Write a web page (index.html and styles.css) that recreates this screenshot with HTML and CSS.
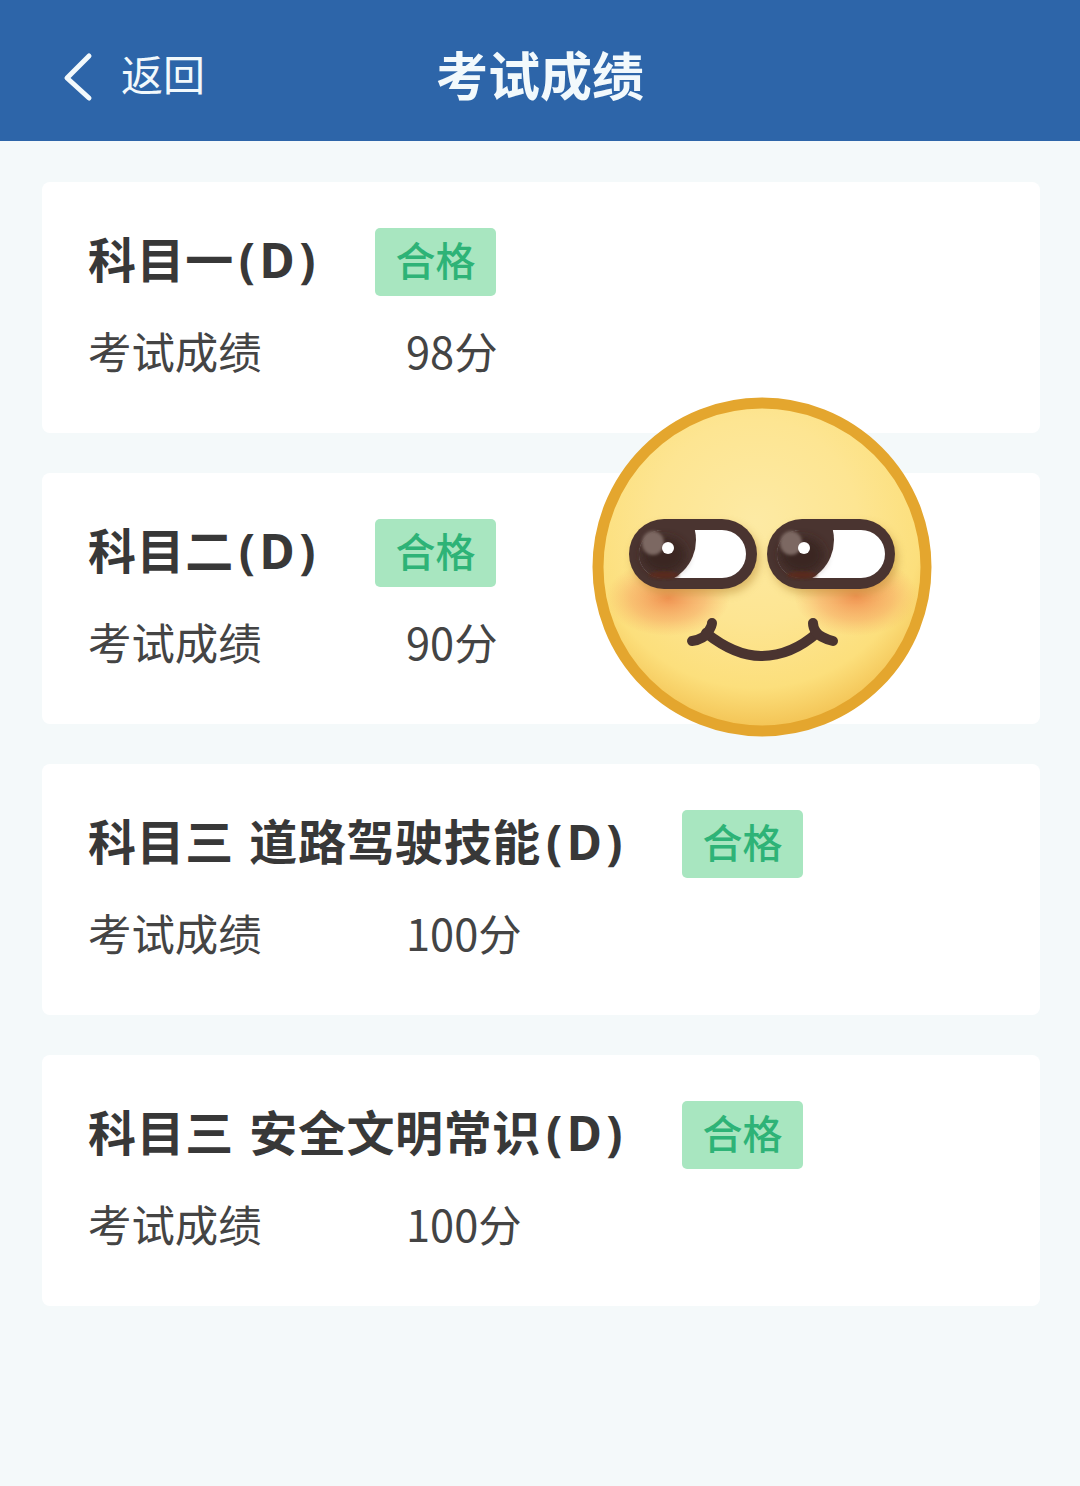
FILE: index.html

```html
<!DOCTYPE html>
<html lang="zh-CN">
<head>
  <meta charset="UTF-8">
  <title>考试成绩</title>
  <link rel="stylesheet" href="styles.css">
</head>
<body>

  <div class="header">
    <div class="back">
      <svg class="back-icon" width="32" height="50" viewBox="0 0 32 50">
        <path d="M27 4 L5 26 L27 46" fill="none" stroke="#f2f9fc" stroke-width="5" stroke-linecap="round" stroke-linejoin="round"/>
      </svg>
      <span class="back-text">返回</span>
    </div>
    <h1>考试成绩</h1>
  </div>

  <div class="list">
    <div class="card">
      <div class="card-title">
        <h2>科目一<span class="grade">(D)</span></h2>
        <span class="badge">合格</span>
      </div>
      <div class="score"><span class="score-label">考试成绩</span><span>98分</span></div>
    </div>
    <div class="card">
      <div class="card-title">
        <h2>科目二<span class="grade">(D)</span></h2>
        <span class="badge">合格</span>
      </div>
      <div class="score"><span class="score-label">考试成绩</span><span>90分</span></div>
    </div>
    <div class="card">
      <div class="card-title">
        <h2>科目三 道路驾驶技能<span class="grade">(D)</span></h2>
        <span class="badge">合格</span>
      </div>
      <div class="score"><span class="score-label">考试成绩</span><span>100分</span></div>
    </div>
    <div class="card">
      <div class="card-title">
        <h2>科目三 安全文明常识<span class="grade">(D)</span></h2>
        <span class="badge">合格</span>
      </div>
      <div class="score"><span class="score-label">考试成绩</span><span>100分</span></div>
    </div>
  </div>

  <svg class="emoji" width="360" height="360" viewBox="0 0 360 360">
    <defs>
      <radialGradient id="face" cx="48%" cy="36%" r="62%">
        <stop offset="0" stop-color="#fdeaa4"/>
        <stop offset="0.5" stop-color="#fde592"/>
        <stop offset="0.82" stop-color="#fcdf7c"/>
        <stop offset="1" stop-color="#f4c658"/>
      </radialGradient>
      <radialGradient id="blush">
        <stop offset="0" stop-color="#ee8448" stop-opacity="0.85"/>
        <stop offset="0.6" stop-color="#f4985a" stop-opacity="0.45"/>
        <stop offset="1" stop-color="#f6a860" stop-opacity="0"/>
      </radialGradient>
      <filter id="soft" x="-30%" y="-30%" width="160%" height="160%">
        <feGaussianBlur stdDeviation="4"/>
      </filter>
      <filter id="soft-small" x="-30%" y="-30%" width="160%" height="160%">
        <feGaussianBlur stdDeviation="1.5"/>
      </filter>
      <clipPath id="eye-left"><rect x="59" y="140" width="107" height="48" rx="24"/></clipPath>
      <clipPath id="eye-right"><rect x="197" y="140" width="108" height="48" rx="24"/></clipPath>
    </defs>
    <circle cx="182" cy="177" r="164" fill="url(#face)" stroke="#e4a62e" stroke-width="11"/>
    <ellipse cx="88" cy="208" rx="62" ry="38" fill="url(#blush)"/>
    <ellipse cx="276" cy="206" rx="62" ry="40" fill="url(#blush)"/>

    <!-- left eye -->
    <rect x="52" y="134" width="128" height="70" rx="35" fill="#b98a35" opacity="0.5" filter="url(#soft)"/>
    <rect x="49" y="129" width="128" height="70" rx="35" fill="#4a3430"/>
    <g clip-path="url(#eye-left)">
      <rect x="59" y="140" width="107" height="48" fill="#fff"/>
      <rect x="49" y="129" width="40" height="70" fill="#4a3430"/>
      <circle cx="72" cy="150" r="44" fill="#4a3430"/>
    </g>
    <ellipse cx="84" cy="165" rx="22" ry="18" fill="#3a2522" filter="url(#soft)"/>
    <ellipse cx="73" cy="153" rx="11" ry="12" fill="#7b6862" filter="url(#soft-small)"/>
    <circle cx="88" cy="158" r="6" fill="#fff"/>
    <ellipse cx="84" cy="185" rx="15" ry="3.5" fill="#5a2c1e" filter="url(#soft-small)"/>

    <!-- right eye -->
    <rect x="190" y="134" width="128" height="70" rx="35" fill="#b98a35" opacity="0.5" filter="url(#soft)"/>
    <rect x="187" y="129" width="128" height="70" rx="35" fill="#4a3430"/>
    <g clip-path="url(#eye-right)">
      <rect x="197" y="140" width="108" height="48" fill="#fff"/>
      <rect x="187" y="129" width="40" height="70" fill="#4a3430"/>
      <circle cx="210" cy="150" r="44" fill="#4a3430"/>
    </g>
    <ellipse cx="222" cy="165" rx="22" ry="18" fill="#3a2522" filter="url(#soft)"/>
    <ellipse cx="211" cy="153" rx="11" ry="12" fill="#7b6862" filter="url(#soft-small)"/>
    <circle cx="224" cy="158" r="6" fill="#fff"/>
    <ellipse cx="222" cy="185" rx="15" ry="3.5" fill="#5a2c1e" filter="url(#soft-small)"/>

    <!-- mouth -->
    <g fill="none" stroke="#4a3430" stroke-width="10" stroke-linecap="round" stroke-linejoin="round">
      <path d="M126 243 C145 258 162 266 181 266 C200 266 220 258 237 243"/>
      <path d="M112 251 C120 250 126 246 128 242 C130 239 132 236 132 233"/>
      <path d="M253 251 C245 249 238 245 236 242 C234 239 233 236 233 233"/>
    </g>
  </svg>

</body>
</html>
```

FILE: styles.css

```css
html, body { margin: 0; padding: 0; }
body { position: relative; min-height: 1486px; background: #f4f9fa; font-family: "Noto Sans CJK SC", "Noto Sans", sans-serif; color: #333; }

.header { position: relative; display: flex; align-items: center; justify-content: center; height: 141px; background: #2d65a9; color: #f2f9fc; }
.header h1 { margin: 6px 0 0; font-size: 52px; font-weight: 700; line-height: 1; }
.back { position: absolute; left: 62px; top: 48px; display: flex; align-items: center; gap: 27px; font-size: 42px; line-height: 50px; }
.back-icon { display: block; margin-top: 4px; }
.back-text { margin-top: -4px; }

.list { display: flex; flex-direction: column; gap: 40px; padding: 41px 40px 0 42px; }
.card { height: 251px; box-sizing: border-box; padding: 46px 46px 0; background: #fff; border-radius: 8px; }
.card-title { display: flex; align-items: center; height: 68px; }
.card-title h2 { margin: -8px 55px 0 0; font-size: 48px; font-weight: 700; line-height: 68px; color: #383838; word-spacing: 4px; letter-spacing: 0.6px; white-space: pre; }
.grade { margin-left: 5px; font-family: "Noto Sans", sans-serif; letter-spacing: 4.5px; }
.badge { width: 121px; height: 68px; display: flex; align-items: center; justify-content: center; background: #a8e6c0; border-radius: 5px; color: #2eb377; font-size: 40px; font-weight: 500; line-height: 1; padding-bottom: 6px; box-sizing: border-box; }
.score { display: flex; margin-top: 22px; font-size: 43.4px; line-height: 64px; color: #444; }
.score-label { width: 318px; }

.emoji { position: absolute; left: 580px; top: 390px; }
```
